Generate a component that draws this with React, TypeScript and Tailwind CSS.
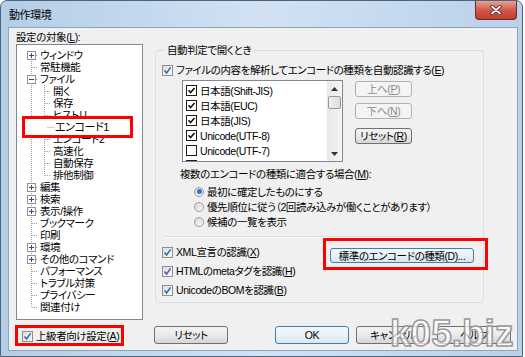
import React from "react";

function Acc({ k }: { k: string }) {
  return (
    <>
      (<u className="underline-offset-1">{k}</u>)
    </>
  );
}

function Check({ on = true }: { on?: boolean }) {
  return (
    <span className="flex h-[11px] w-[11px] shrink-0 items-center justify-center border border-[#8f8f8f] bg-white">
      <span className="flex h-[9px] w-[9px] items-center justify-center bg-gradient-to-br from-[#dcdcdc] to-[#fbfbfb]">
        {on && (
          <svg width="9" height="9" viewBox="0 0 9 9">
            <path d="M1.5 4.5 L3.6 7 L7.6 1.4" fill="none" stroke="#3b63b0" strokeWidth="1.5" />
          </svg>
        )}
      </span>
    </span>
  );
}

function FlatCheck({ on }: { on: boolean }) {
  return (
    <span className="flex h-[11px] w-[11px] shrink-0 items-center justify-center border border-[#1c1c1c] bg-white">
      {on && (
        <svg width="9" height="9" viewBox="0 0 9 9">
          <path d="M1.5 4.3 L3.6 6.6 L7.5 2" fill="none" stroke="#111" strokeWidth="1.6" />
        </svg>
      )}
    </span>
  );
}

function Radio({ on }: { on: boolean }) {
  return (
    <span className="flex h-[10px] w-[10px] shrink-0 items-center justify-center rounded-full border border-[#9c9c9c] bg-gradient-to-br from-[#d6d6d6] to-[#fafafa]">
      {on && <span className="h-[5px] w-[5px] rounded-full bg-[#2579cf]" />}
    </span>
  );
}

const btn =
  "flex items-center justify-center rounded-[3px] border bg-gradient-to-b from-[#f3f3f3] via-[#ebebeb] to-[#d5d5d5]";

type Node = { t: string; lv: number; ex?: string; lastChild?: boolean };

const tree: Node[] = [
  { t: "ウィンドウ", lv: 0, ex: "+" },
  { t: "常駐機能", lv: 0 },
  { t: "ファイル", lv: 0, ex: "-" },
  { t: "開く", lv: 1 },
  { t: "保存", lv: 1 },
  { t: "ヒストリ", lv: 1 },
  { t: "エンコード1", lv: 1 },
  { t: "エンコード2", lv: 1 },
  { t: "高速化", lv: 1 },
  { t: "自動保存", lv: 1 },
  { t: "排他制御", lv: 1, lastChild: true },
  { t: "編集", lv: 0, ex: "+" },
  { t: "検索", lv: 0, ex: "+" },
  { t: "表示/操作", lv: 0, ex: "+" },
  { t: "ブックマーク", lv: 0 },
  { t: "印刷", lv: 0 },
  { t: "環境", lv: 0, ex: "+" },
  { t: "その他のコマンド", lv: 0, ex: "+" },
  { t: "パフォーマンス", lv: 0 },
  { t: "トラブル対策", lv: 0 },
  { t: "プライバシー", lv: 0 },
  { t: "関連付け", lv: 0 },
];

function Gutter({ n, first, last }: { n: Node; first: boolean; last: boolean }) {
  const w = n.lv === 0 ? 22 : 35;
  return (
    <svg width={w} height="12" className="shrink-0">
      <g stroke="#a0a0a0" strokeDasharray="1 1" fill="none">
        <line x1="14.5" y1={first ? 6 : 0} x2="14.5" y2={last ? 6.5 : 12} />
        {n.lv === 0 ? (
          <line x1="15" y1="6.5" x2="21" y2="6.5" />
        ) : (
          <>
            <line x1="27.5" y1="0" x2="27.5" y2={n.lastChild ? 6.5 : 12} />
            <line x1="28" y1="6.5" x2="34" y2="6.5" />
          </>
        )}
      </g>
      {n.ex && (
        <g>
          <rect x="10.5" y="2.5" width="8" height="8" fill="#fff" stroke="#919191" />
          <line x1="12" y1="6.5" x2="17" y2="6.5" stroke="#2c4a8c" />
          {n.ex === "+" && <line x1="14.5" y1="4" x2="14.5" y2="9" stroke="#2c4a8c" />}
        </g>
      )}
    </svg>
  );
}

const encodings = [
  { t: "日本語(Shift-JIS)", on: true },
  { t: "日本語(EUC)", on: true },
  { t: "日本語(JIS)", on: true },
  { t: "Unicode(UTF-8)", on: true },
  { t: "Unicode(UTF-7)", on: false },
  { t: "Unicode(UTF-16LE)", on: false },
];

export default function App() {
  return (
    <div className="relative h-[357px] w-[525px] overflow-hidden bg-white font-['Liberation_Sans','Noto_Sans_CJK_JP',sans-serif] text-[10.5px] leading-[12px] tracking-[-0.4px] text-black [font-feature-settings:'palt']">
      <div className="flex h-[357px] w-[523px] flex-col rounded-t-[7px] border border-[#4f637a] bg-gradient-to-r from-[#b4cde7] via-[#d2e2f3] to-[#b9d1ea] pb-[5px] pl-[7px] pr-[4px]">
        {/* title bar */}
        <div className="flex h-[26px] items-start justify-between">
          <span className="mt-[8px] pl-[1px] text-[11px]">動作環境</span>
          <div className="mr-[1px] flex h-[19px] w-[42px] items-center justify-center rounded-b-[4px] border border-t-0 border-[#6b2b24] bg-gradient-to-b from-[#e6a294] via-[#cf5a4b] to-[#c23c2c]">
            <svg width="12" height="10" viewBox="0 0 12 10">
              <path d="M2 1.5 L10 8.5 M10 1.5 L2 8.5" stroke="#4a1d18" strokeWidth="3.4" strokeLinecap="round" />
              <path d="M2 1.5 L10 8.5 M10 1.5 L2 8.5" stroke="#fff" strokeWidth="1.8" strokeLinecap="round" />
            </svg>
          </div>
        </div>

        {/* client area */}
        <div className="flex flex-1 border border-[#8fa4b9] bg-[#f0f0f0]">
          {/* left column */}
          <div className="flex w-[134px] flex-col pl-[7px]">
            <div className="h-[16px] pt-[3px]">
              設定の対象
              <Acc k="L" />:
            </div>
            <div className="flex h-[276px] w-[127px] flex-col border border-[#828790] bg-white pt-[4px]">
              {tree.map((n, i) => (
                <div key={n.t} className="flex h-[12px] items-center whitespace-nowrap">
                  <Gutter n={n} first={i === 0} last={i === tree.length - 1} />
                  <span className="pl-[1px]">{n.t}</span>
                </div>
              ))}
            </div>
            <div className="mt-[10px] flex h-[12px] items-center gap-[3px] pl-[6px]">
              <Check />
              <span>
                上級者向け設定
                <Acc k="A" />
              </span>
            </div>
          </div>

          {/* right column */}
          <div className="ml-[11px] flex w-[357px] flex-col">
            <fieldset className="ml-[1px] mt-[16px] w-[329px] rounded-[3px] border border-[#d5dfe5] pb-[6px] pl-[6px]">
              <legend className="ml-[3px] px-[2px] leading-[12px]">自動判定で開くとき</legend>
              <div className="mt-[8px] flex h-[12px] items-center gap-[3px]">
                <Check />
                <span className="whitespace-nowrap">
                  ファイルの内容を解析してエンコードの種類を自動認識する
                  <Acc k="E" />
                </span>
              </div>

              <div className="mt-[4px] flex">
                <div className="ml-[20px] flex h-[82px] w-[161px] border border-[#828790] bg-white">
                  <div className="flex flex-1 flex-col overflow-hidden pl-[3px] pt-[2px]">
                    {encodings.map((e) => (
                      <div key={e.t} className="flex h-[15px] shrink-0 items-center gap-[3px] whitespace-nowrap">
                        <FlatCheck on={e.on} />
                        <span>{e.t}</span>
                      </div>
                    ))}
                  </div>
                  <div className="flex w-[15px] flex-col items-center bg-gradient-to-r from-[#e8e8e8] to-[#f5f5f5]">
                    <div className="flex h-[15px] items-center justify-center">
                      <svg width="7" height="4" viewBox="0 0 7 4">
                        <path d="M0 4 L3.5 0 L7 4 Z" fill="#333" />
                      </svg>
                    </div>
                    <div className="h-[13px] w-[13px] rounded-[2px] border border-[#979797] bg-gradient-to-r from-[#f2f2f2] to-[#dcdcdc]" />
                    <div className="flex-1" />
                    <div className="flex h-[15px] items-center justify-center">
                      <svg width="7" height="4" viewBox="0 0 7 4">
                        <path d="M0 0 L3.5 4 L7 0 Z" fill="#333" />
                      </svg>
                    </div>
                  </div>
                </div>
                <div className="ml-[12px] mt-[1px] flex flex-col">
                  <div className="flex h-[16px] w-[57px] items-center justify-center rounded-[3px] border border-[#adb2b5] bg-[#f4f4f4] text-[#8a8a8a]">
                    上へ
                    <Acc k="P" />
                  </div>
                  <div className="mt-[6px] flex h-[16px] w-[57px] items-center justify-center rounded-[3px] border border-[#adb2b5] bg-[#f4f4f4] text-[#8a8a8a]">
                    下へ
                    <Acc k="N" />
                  </div>
                  <div className={`${btn} mt-[9px] h-[16px] w-[57px] border-[#707070]`}>
                    リセット
                    <Acc k="R" />
                  </div>
                </div>
              </div>

              <div className="ml-[18px] mt-[6px] h-[12px] whitespace-nowrap">
                複数のエンコードの種類に適合する場合
                <Acc k="M" />:
              </div>
              <div className="ml-[32px] mt-[4px] flex flex-col">
                {[
                  { t: "最初に確定したものにする", on: true },
                  { t: "優先順位に従う（2回読み込みが働くことがあります）", on: false },
                  { t: "候補の一覧を表示", on: false },
                ].map((r) => (
                  <div key={r.t} className="flex h-[15px] items-center gap-[3px] whitespace-nowrap">
                    <Radio on={r.on} />
                    <span>{r.t}</span>
                  </div>
                ))}
              </div>

              <div className="ml-[1px] mt-[7px] h-[2px] w-[311px] border-t border-b border-t-[#d5dfe5] border-b-white" />

              <div className="mt-[8px] flex">
                <div className="flex w-[168px] flex-col gap-[7px]">
                  {[
                    { t: "XML宣言の認識", k: "X" },
                    { t: "HTMLのmetaタグを認識", k: "H" },
                    { t: "UnicodeのBOMを認識", k: "B" },
                  ].map((c) => (
                    <div key={c.t} className="flex h-[12px] items-center gap-[3px] whitespace-nowrap">
                      <Check />
                      <span>
                        {c.t}
                        <Acc k={c.k} />
                      </span>
                    </div>
                  ))}
                </div>
                <div className="mt-[2px] flex h-[15px] w-[144px] items-center justify-center rounded-[3px] border border-[#3c7fb1] bg-gradient-to-b from-[#f4f8fb] via-[#eaf1f7] to-[#d8e4ee]">
                  標準のエンコードの種類(D)...
                </div>
              </div>
            </fieldset>

            <div className="mt-[23px] flex gap-[7px]">
              <div className={`${btn} h-[18px] w-[74px] border-[#707070]`}>リセット</div>
              <div className="ml-[40px] flex h-[18px] w-[74px] items-center justify-center rounded-[3px] border border-[#3c7fb1] bg-gradient-to-b from-[#f4f8fb] via-[#eaf1f7] to-[#dbe7f1]">
                OK
              </div>
              <div className={`${btn} h-[18px] w-[74px] border-[#707070]`}>キャンセル</div>
              <div className={`${btn} h-[18px] w-[74px] border-[#707070]`}>ヘルプ</div>
            </div>
          </div>
        </div>
      </div>

      {/* annotations pasted over the screenshot */}
      <div className="absolute left-[22px] top-[116px] flex h-[22px] w-[111px] items-center border-[3px] border-[#f00] bg-white">
        <svg width="30" height="12" className="shrink-0">
          <line x1="22.5" y1="6.5" x2="30" y2="6.5" stroke="#a0a0a0" strokeDasharray="1 1" />
        </svg>
        <span className="text-[11px]">エンコード1</span>
      </div>
      <div className="absolute left-[15px] top-[325px] h-[21px] w-[109px] border-[3px] border-[#f00]" />
      <div className="absolute left-[323px] top-[238px] h-[32px] w-[165px] border-[3px] border-[#f00]" />
      <div className="absolute left-[390px] top-[314px] text-[37px] font-bold leading-[40px] tracking-normal text-white/70 [-webkit-text-stroke:1.5px_#9a9a9a]">
        k05.biz
      </div>
    </div>
  );
}
